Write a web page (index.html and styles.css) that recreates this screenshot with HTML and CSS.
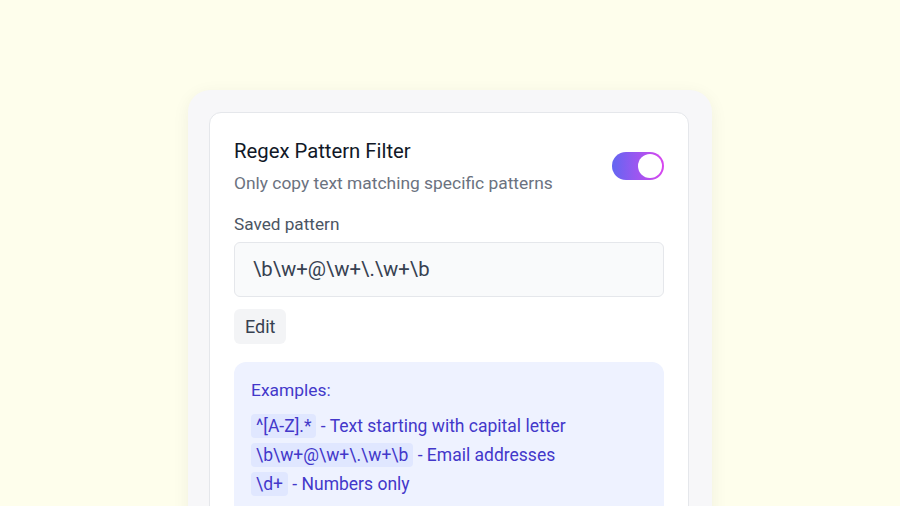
FILE: index.html
```html
<!DOCTYPE html>
<html lang="en">
<head>
    <meta charset="UTF-8">
    <meta name="viewport" content="width=device-width, initial-scale=1.0">
    <title>Regex Pattern Filter</title>
    <link rel="stylesheet" href="styles.css">
</head>
<body>
    <div class="shell">
        <div class="card">
            <div class="header">
                <div>
                    <h2 class="title">Regex Pattern Filter</h2>
                    <p class="subtitle">Only copy text matching specific patterns</p>
                </div>
                <span class="toggle"><span class="knob"></span></span>
            </div>

            <label class="label">Saved pattern</label>
            <div class="pattern">\b\w+@\w+\.\w+\b</div>
            <button class="edit" type="button">Edit</button>

            <div class="examples">
                <p class="examples-title">Examples:</p>
                <p class="example"><code>^[A-Z].*</code> - Text starting with capital letter</p>
                <p class="example"><code>\b\w+@\w+\.\w+\b</code> - Email addresses</p>
                <p class="example"><code>\d+</code> - Numbers only</p>
            </div>
        </div>
    </div>
</body>
</html>
```

FILE: styles.css
```css
body {
    margin: 0;
    height: 506px;
    overflow: hidden;
    background-color: #fefeec;
    font-family: Roboto, "Liberation Sans", sans-serif;
}
.shell {
    width: 480px;
    margin: 90px auto 0;
    padding: 22px 23px 22px 21px;
    background-color: #f7f7f9;
    border-radius: 22px;
    box-shadow: 0 4px 18px rgba(0, 0, 0, 0.06);
}
.card {
    background: #fff;
    border: 1px solid #e5e7eb;
    border-radius: 12px;
    padding: 24px;
}
.header {
    display: flex;
    justify-content: space-between;
    align-items: center;
}
.title {
    margin: 0;
    font-size: 20.3px;
    font-weight: 400;
    line-height: 28px;
    color: #111827;
}
.subtitle {
    margin: 6px 0 0;
    font-size: 17.4px;
    line-height: 24px;
    color: #6b7280;
}
.toggle {
    width: 52px;
    height: 28px;
    border-radius: 14px;
    background: linear-gradient(90deg, #6366f1, #d946ef);
    display: flex;
    align-items: center;
    justify-content: flex-end;
    padding: 0 2px;
    box-sizing: border-box;
}
.knob {
    width: 24px;
    height: 24px;
    border-radius: 50%;
    background: #fff;
}
.label {
    display: block;
    margin-top: 17px;
    font-size: 17.2px;
    line-height: 24px;
    color: #4b5563;
}
.pattern {
    margin-top: 6px;
    padding: 0 18px;
    height: 53px;
    line-height: 53px;
    background: #f9fafb;
    border: 1px solid #e5e7eb;
    border-radius: 6px;
    font-size: 20.3px;
    color: #374151;
}
.edit {
    margin-top: 12px;
    height: 35px;
    padding: 0 11px;
    border: none;
    border-radius: 6px;
    background: #f3f4f6;
    font-family: inherit;
    font-size: 18px;
    color: #374151;
}
.examples {
    margin-top: 18px;
    padding: 16px 17px 20px;
    background: #eef2ff;
    border-radius: 12px;
    color: #4338ca;
}
.examples-title {
    margin: 0 0 10px;
    font-size: 17.4px;
    line-height: 24px;
}
.example {
    margin: 0;
    font-size: 17.5px;
    line-height: 29px;
}
.example code {
    font-family: inherit;
    background: #e0e7ff;
    border-radius: 4px;
    padding: 2px 5px;
}
```
